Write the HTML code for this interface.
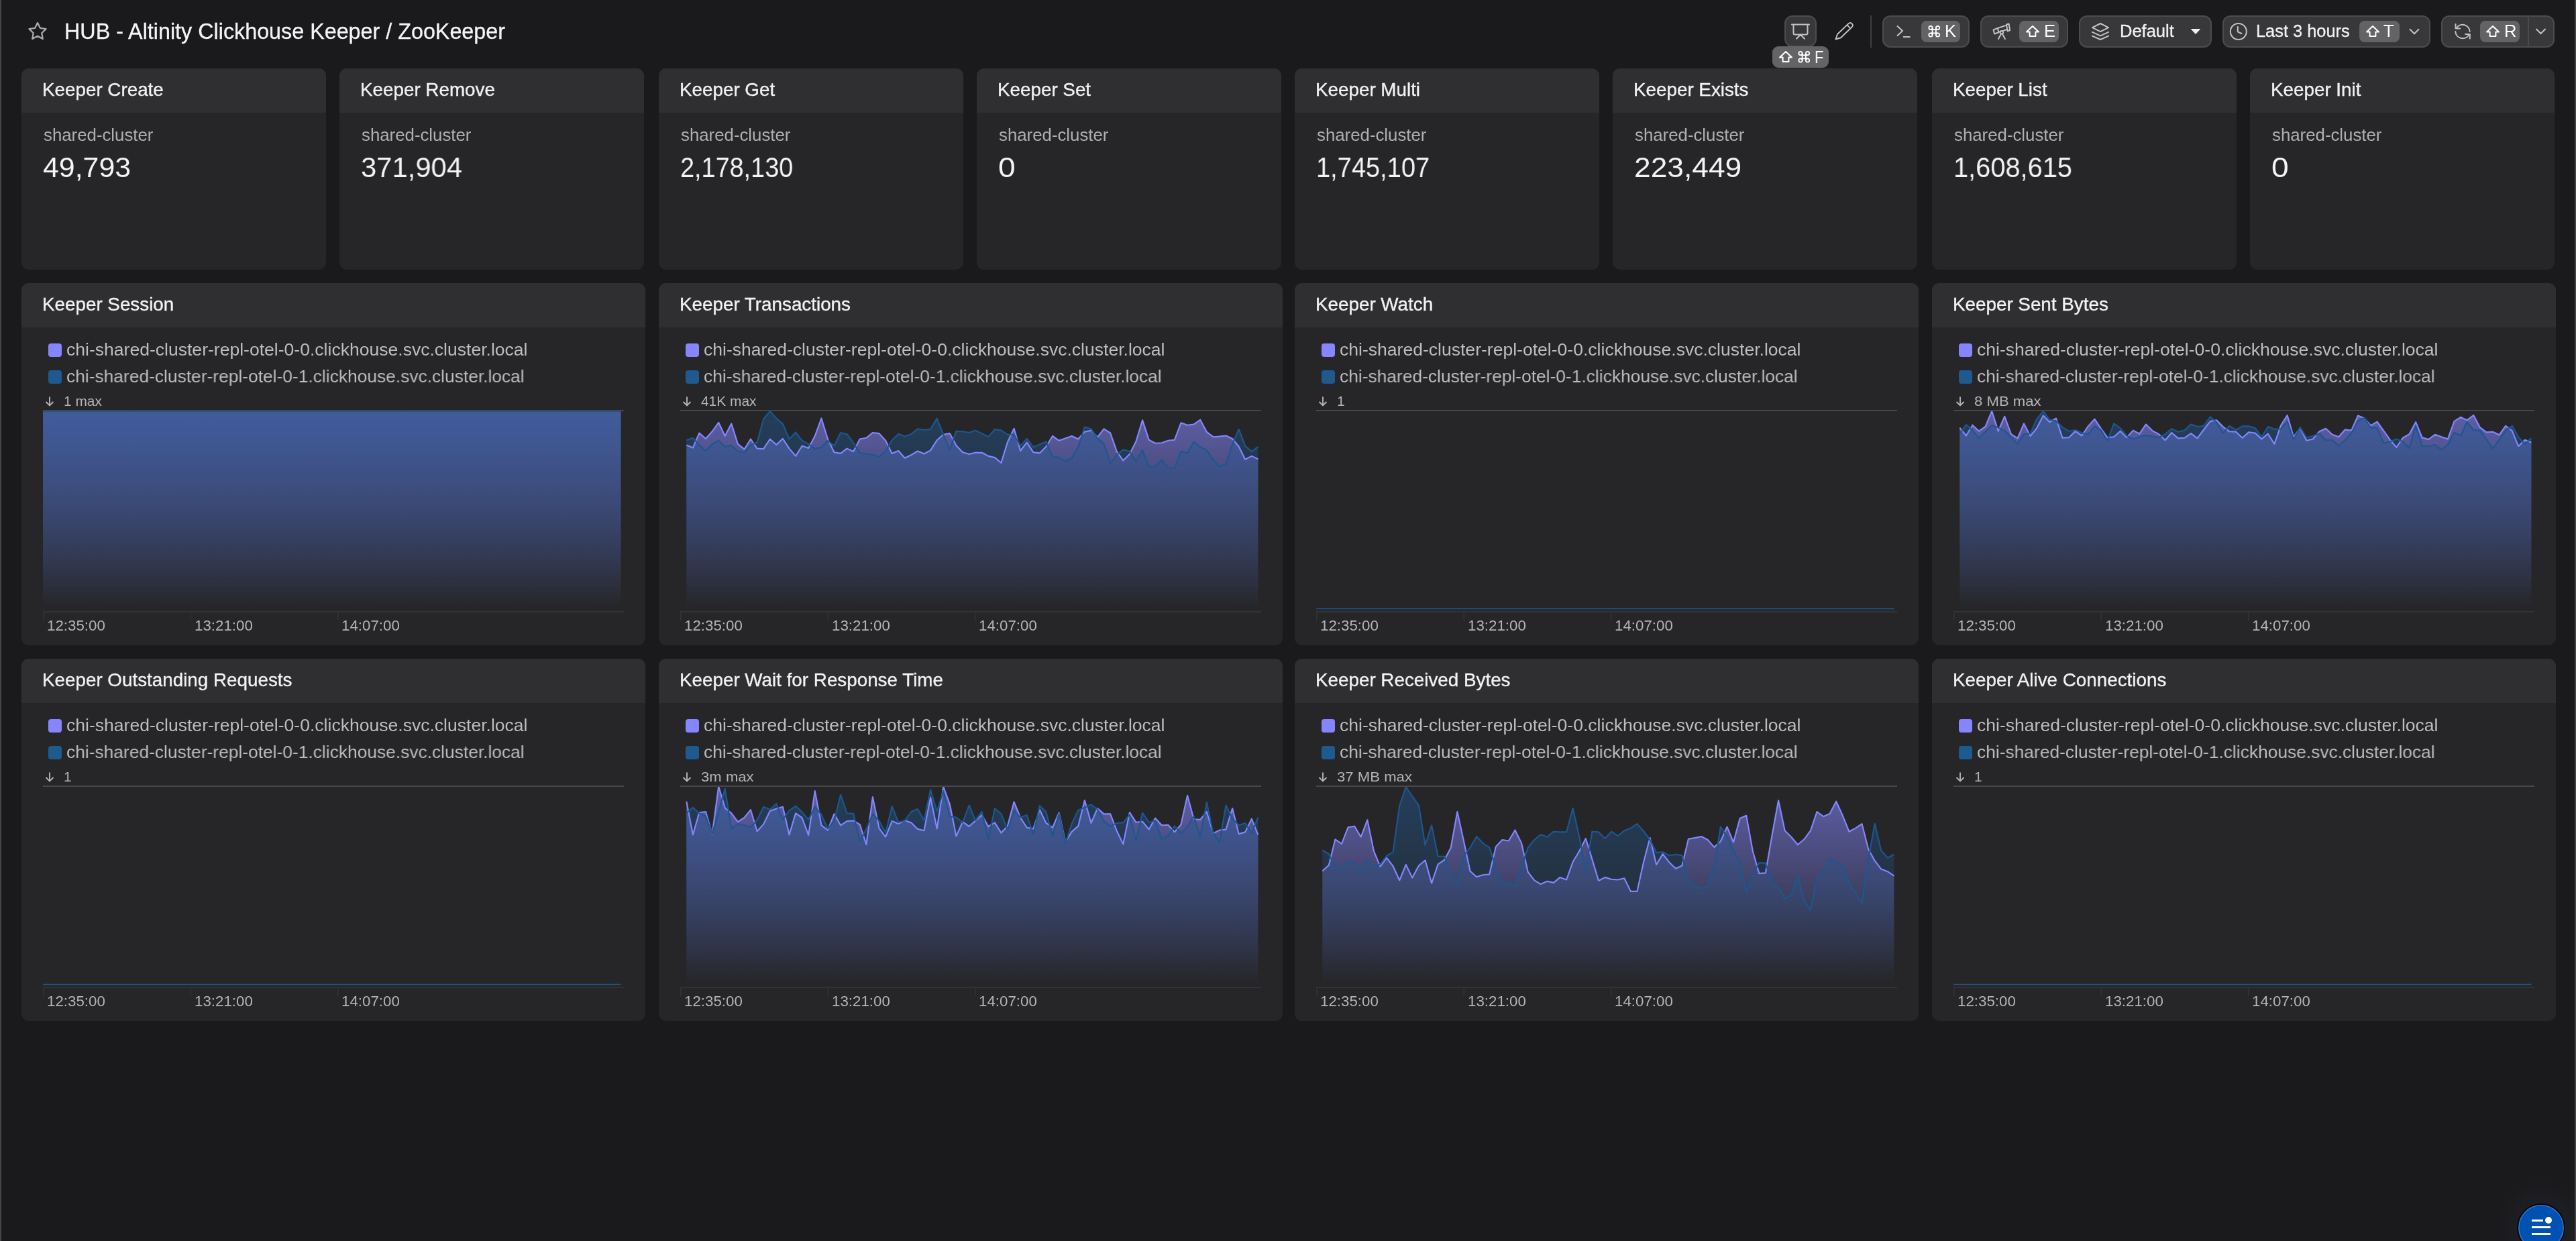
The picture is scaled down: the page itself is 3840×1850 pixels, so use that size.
<!DOCTYPE html>
<html><head><meta charset="utf-8"><style>
html,body{margin:0;padding:0;width:3840px;height:1850px;overflow:hidden;background:#1a1a1c;}
body{position:relative;font-family:"Liberation Sans",sans-serif;}
.t{position:absolute;white-space:nowrap;line-height:1;will-change:transform;}
.card{position:absolute;background:#262628;border-radius:11px;overflow:hidden;}
.hdr{position:absolute;left:0;top:0;right:0;height:66px;background:#2f2f32;}
.btn{position:absolute;box-sizing:border-box;background:#38383a;border:2px solid #4c4c4f;border-radius:12px;}
.kbd{position:absolute;background:#636365;border-radius:8px;}
.sw{position:absolute;width:20px;height:20px;border-radius:4px;}
</style></head><body>
<div style="position:absolute;left:0;top:0;width:2px;height:1850px;background:#464648"></div><div style="position:absolute;left:3838px;top:0;width:2px;height:1850px;background:#464648"></div><svg style="position:absolute;left:0;top:0" width="100" height="100" viewBox="0 0 100 100"><path d="M56.00 34.00 L59.88 41.86 L68.55 43.12 L62.28 49.24 L63.76 57.88 L56.00 53.80 L48.24 57.88 L49.72 49.24 L43.45 43.12 L52.12 41.86 Z" fill="none" stroke="#a9a9ab" stroke-width="2.3" stroke-linejoin="round"/></svg><div class="t" style="left:96px;top:30.66px;font-size:32.3px;color:#f4f4f5;-webkit-text-stroke:0.3px #f4f4f5;">HUB - Altinity Clickhouse Keeper / ZooKeeper</div><div class="btn" style="left:2660px;top:23px;width:48px;height:47px"></div><div class="btn" style="left:2806px;top:23px;width:130px;height:48px"></div><div class="btn" style="left:2952px;top:23px;width:131px;height:48px"></div><div class="btn" style="left:3099px;top:23px;width:198px;height:48px"></div><div class="btn" style="left:3313px;top:23px;width:310px;height:48px"></div><div class="btn" style="left:3639px;top:23px;width:169px;height:48px"></div><div style="position:absolute;left:2788px;top:23px;width:2px;height:48px;background:#3f3f42"></div><div style="position:absolute;left:3768px;top:24px;width:2px;height:46px;background:#4a4a4d"></div><div class="kbd" style="left:2642px;top:69px;width:84px;height:32px;border-radius:9px;background:#646466"></div><div class="kbd" style="left:2864px;top:31px;width:58px;height:32px"></div><div class="kbd" style="left:3010px;top:31px;width:59px;height:32px"></div><div class="kbd" style="left:3517px;top:31px;width:60px;height:32px"></div><div class="kbd" style="left:3697px;top:31px;width:59px;height:32px"></div><svg style="position:absolute;left:0;top:0" width="3840" height="110" viewBox="0 0 3840 110"><path d="M2671 36.5 H2697 M2673.5 36.5 V49.5 Q2673.5 51.5 2675.5 51.5 H2692.5 Q2694.5 51.5 2694.5 49.5 V36.5 M2684 51.5 L2678 57.8 M2684 51.5 L2690 57.8" fill="none" stroke="#c2c2c4" stroke-width="2" stroke-linecap="round"/><g transform="translate(2736.5 58.5) rotate(-44)"><path d="M0 0 L7 -3.6 H30 Q33.5 -3.6 33.5 0 Q33.5 3.6 30 3.6 H7 Z M27 -3.6 V3.6" fill="none" stroke="#c2c2c4" stroke-width="1.9" stroke-linejoin="round"/></g><path d="M2828 38.5 L2836 46 L2828 53.5 M2837 55 H2847.5" fill="none" stroke="#c2c2c4" stroke-width="2"/><path d="M2880.615 41.48 V52.019999999999996 M2885.885 41.48 V52.019999999999996 M2877.98 44.115 H2888.52 M2877.98 49.385 H2888.52" fill="none" stroke="#ffffff" stroke-width="1.8"/><circle cx="2877.98" cy="41.48" r="2.6350000000000002" fill="none" stroke="#ffffff" stroke-width="1.8"/><circle cx="2888.52" cy="41.48" r="2.6350000000000002" fill="none" stroke="#ffffff" stroke-width="1.8"/><circle cx="2877.98" cy="52.019999999999996" r="2.6350000000000002" fill="none" stroke="#ffffff" stroke-width="1.8"/><circle cx="2888.52" cy="52.019999999999996" r="2.6350000000000002" fill="none" stroke="#ffffff" stroke-width="1.8"/><g fill="none" stroke="#c2c2c4" stroke-width="2" stroke-linejoin="round" stroke-linecap="round"><path d="M2971.6 44.4 L2977.8 42 L2979.3 48.3 L2973.1 50.5 Z"/><path d="M2977.9 42 L2991 37.6 M2979.5 47.8 L2983 46.8 M2985.6 45.9 L2992.6 43.8"/><path d="M2991 36.4 L2994.6 35.6 L2996.1 45.2 L2992.6 46.4 Z"/><circle cx="2983.9" cy="48.3" r="2.2"/><path d="M2982.6 51.2 L2979 58 M2985.2 51.2 L2988.9 58"/></g><path d="M3030.0 39 L3039 47.52 L3034.4 47.52 L3034.4 54 L3025.6 54 L3025.6 47.52 L3021 47.52 Z" fill="none" stroke="#ffffff" stroke-width="2" stroke-linejoin="round"/><g fill="none" stroke="#c2c2c4" stroke-width="2" stroke-linejoin="round" stroke-linecap="round"><path d="M3119 41.2 L3131.1 35 L3143 41.2 L3131.1 47.2 Z"/><path d="M3119 47.9 L3131.1 53.4 L3143 47.9"/><path d="M3119 53.6 L3131.1 59 L3143 53.6"/></g><path d="M3266.5 43.5 H3279.5 L3273 50.5 Z" fill="#f2f2f2" stroke="#f2f2f2" stroke-width="1" stroke-linejoin="round"/><g fill="none" stroke="#c2c2c4" stroke-width="2" stroke-linecap="round"><circle cx="3336.8" cy="47" r="12"/><path d="M3335.8 40 V47.3 L3341.5 50"/></g><path d="M3537.0 39 L3546 47.52 L3541.4 47.52 L3541.4 54 L3532.6 54 L3532.6 47.52 L3528 47.52 Z" fill="none" stroke="#ffffff" stroke-width="2" stroke-linejoin="round"/><path d="M3592.5 43.8 L3599 50.3 L3605.5 43.8" fill="none" stroke="#c2c2c4" stroke-width="2" stroke-linecap="round"/><g fill="none" stroke="#c2c2c4" stroke-width="2" stroke-linecap="round" stroke-linejoin="round"><path d="M3681.7 47 A10.8 10.8 0 0 0 3662 41.5"/><path d="M3660.5 36 V42.5 H3667"/><path d="M3660.3 47 A10.8 10.8 0 0 0 3680 52.5"/><path d="M3675 51 H3681.8 V57.5"/></g><path d="M3716.0 39 L3725 47.52 L3720.4 47.52 L3720.4 54 L3711.6 54 L3711.6 47.52 L3707 47.52 Z" fill="none" stroke="#ffffff" stroke-width="2" stroke-linejoin="round"/><path d="M3781 43.5 L3787.5 50 L3794 43.5" fill="none" stroke="#c2c2c4" stroke-width="2" stroke-linecap="round"/><path d="M2662.0 77 L2671 85.52 L2666.4 85.52 L2666.4 92 L2657.6 92 L2657.6 85.52 L2653 85.52 Z" fill="none" stroke="#ffffff" stroke-width="2" stroke-linejoin="round"/><path d="M2686.615 79.48 V90.02 M2691.885 79.48 V90.02 M2683.98 82.115 H2694.52 M2683.98 87.385 H2694.52" fill="none" stroke="#ffffff" stroke-width="1.8"/><circle cx="2683.98" cy="79.48" r="2.6350000000000002" fill="none" stroke="#ffffff" stroke-width="1.8"/><circle cx="2694.52" cy="79.48" r="2.6350000000000002" fill="none" stroke="#ffffff" stroke-width="1.8"/><circle cx="2683.98" cy="90.02" r="2.6350000000000002" fill="none" stroke="#ffffff" stroke-width="1.8"/><circle cx="2694.52" cy="90.02" r="2.6350000000000002" fill="none" stroke="#ffffff" stroke-width="1.8"/></svg><div class="t" style="left:2898.5px;top:34.41px;font-size:25.5px;color:#ffffff;">K</div><div class="t" style="left:3046.5px;top:34.41px;font-size:25.5px;color:#ffffff;">E</div><div class="t" style="left:3553px;top:34.41px;font-size:25.5px;color:#ffffff;">T</div><div class="t" style="left:3732.5px;top:34.41px;font-size:25.5px;color:#ffffff;">R</div><div class="t" style="left:2704.5px;top:72.91px;font-size:25.5px;color:#ffffff;transform:scaleX(0.85);transform-origin:0 0;">F</div><div class="t" style="left:3160px;top:34.41px;font-size:25.5px;color:#f2f2f2;-webkit-text-stroke:0.3px #f2f2f2;">Default</div><div class="t" style="left:3363px;top:34.00px;font-size:25.4px;color:#f2f2f2;-webkit-text-stroke:0.3px #f2f2f2;">Last 3 hours</div><div class="card" style="left:32px;top:102px;width:454px;height:300px"><div class="hdr"></div><div class="t" style="left:30.5px;top:18.17px;font-size:27.8px;color:#f2f2f2;-webkit-text-stroke:0.35px #f2f2f2;">Keeper Create</div><div class="t" style="left:33px;top:87.16px;font-size:25.8px;color:#afafb1;">shared-cluster</div><div class="t" style="left:32px;top:127.45px;font-size:42px;color:#f4f4f5;transform:scaleX(1.02);transform-origin:0 0;">49,793</div></div><div class="card" style="left:506px;top:102px;width:454px;height:300px"><div class="hdr"></div><div class="t" style="left:30.5px;top:18.17px;font-size:27.8px;color:#f2f2f2;-webkit-text-stroke:0.35px #f2f2f2;">Keeper Remove</div><div class="t" style="left:33px;top:87.16px;font-size:25.8px;color:#afafb1;">shared-cluster</div><div class="t" style="left:32px;top:127.45px;font-size:42px;color:#f4f4f5;transform:scaleX(0.995);transform-origin:0 0;">371,904</div></div><div class="card" style="left:982px;top:102px;width:454px;height:300px"><div class="hdr"></div><div class="t" style="left:30.5px;top:18.17px;font-size:27.8px;color:#f2f2f2;-webkit-text-stroke:0.35px #f2f2f2;">Keeper Get</div><div class="t" style="left:33px;top:87.16px;font-size:25.8px;color:#afafb1;">shared-cluster</div><div class="t" style="left:32px;top:127.45px;font-size:42px;color:#f4f4f5;transform:scaleX(0.9);transform-origin:0 0;">2,178,130</div></div><div class="card" style="left:1456px;top:102px;width:454px;height:300px"><div class="hdr"></div><div class="t" style="left:30.5px;top:18.17px;font-size:27.8px;color:#f2f2f2;-webkit-text-stroke:0.35px #f2f2f2;">Keeper Set</div><div class="t" style="left:33px;top:87.16px;font-size:25.8px;color:#afafb1;">shared-cluster</div><div class="t" style="left:32px;top:127.45px;font-size:42px;color:#f4f4f5;transform:scaleX(1.1);transform-origin:0 0;">0</div></div><div class="card" style="left:1930px;top:102px;width:454px;height:300px"><div class="hdr"></div><div class="t" style="left:30.5px;top:18.17px;font-size:27.8px;color:#f2f2f2;-webkit-text-stroke:0.35px #f2f2f2;">Keeper Multi</div><div class="t" style="left:33px;top:87.16px;font-size:25.8px;color:#afafb1;">shared-cluster</div><div class="t" style="left:32px;top:127.45px;font-size:42px;color:#f4f4f5;transform:scaleX(0.905);transform-origin:0 0;">1,745,107</div></div><div class="card" style="left:2404px;top:102px;width:454px;height:300px"><div class="hdr"></div><div class="t" style="left:30.5px;top:18.17px;font-size:27.8px;color:#f2f2f2;-webkit-text-stroke:0.35px #f2f2f2;">Keeper Exists</div><div class="t" style="left:33px;top:87.16px;font-size:25.8px;color:#afafb1;">shared-cluster</div><div class="t" style="left:32px;top:127.45px;font-size:42px;color:#f4f4f5;transform:scaleX(1.055);transform-origin:0 0;">223,449</div></div><div class="card" style="left:2880px;top:102px;width:454px;height:300px"><div class="hdr"></div><div class="t" style="left:30.5px;top:18.17px;font-size:27.8px;color:#f2f2f2;-webkit-text-stroke:0.35px #f2f2f2;">Keeper List</div><div class="t" style="left:33px;top:87.16px;font-size:25.8px;color:#afafb1;">shared-cluster</div><div class="t" style="left:32px;top:127.45px;font-size:42px;color:#f4f4f5;transform:scaleX(0.947);transform-origin:0 0;">1,608,615</div></div><div class="card" style="left:3354px;top:102px;width:454px;height:300px"><div class="hdr"></div><div class="t" style="left:30.5px;top:18.17px;font-size:27.8px;color:#f2f2f2;-webkit-text-stroke:0.35px #f2f2f2;">Keeper Init</div><div class="t" style="left:33px;top:87.16px;font-size:25.8px;color:#afafb1;">shared-cluster</div><div class="t" style="left:32px;top:127.45px;font-size:42px;color:#f4f4f5;transform:scaleX(1.1);transform-origin:0 0;">0</div></div><div class="card" style="left:32px;top:422px;width:930px;height:540px"><div class="hdr"></div><div class="t" style="left:30.5px;top:18.17px;font-size:27.8px;color:#f2f2f2;-webkit-text-stroke:0.35px #f2f2f2;">Keeper Session</div><div class="sw" style="left:40px;top:90px;background:#8586ff"></div><div class="sw" style="left:40px;top:130px;background:#1f5a8f"></div><div class="t" style="left:67px;top:86.03px;font-size:26.55px;color:#bdbdbf;">chi-shared-cluster-repl-otel-0-0.clickhouse.svc.cluster.local</div><div class="t" style="left:67px;top:126.03px;font-size:26.55px;color:#bdbdbf;transform:scaleX(0.993);transform-origin:0 0;">chi-shared-cluster-repl-otel-0-1.clickhouse.svc.cluster.local</div><svg style="position:absolute;left:34px;top:168px" width="16" height="16" viewBox="0 0 16 16"><path d="M8 1.5 V14.5 M2.5 9 L8 14.5 L13.5 9" fill="none" stroke="#b4b4b6" stroke-width="1.9"/></svg><div class="t" style="left:63px;top:165.81px;font-size:20.9px;color:#b4b4b6;transform:scaleX(1.0);transform-origin:0 0;">1 max</div><svg style="position:absolute;left:0;top:0" width="930" height="540" viewBox="0 0 930 540"><defs><linearGradient id="g0" x1="0" y1="0" x2="0" y2="1"><stop offset="0" stop-color="#3d5a96"/><stop offset="1" stop-color="#262628"/></linearGradient></defs><defs><linearGradient id="gl0" gradientUnits="userSpaceOnUse" x1="0" y1="190.2" x2="0" y2="485.5"><stop offset="0" stop-color="#8486ff" stop-opacity="0.6"/><stop offset="1" stop-color="#8486ff" stop-opacity="0"/></linearGradient><linearGradient id="gd0" gradientUnits="userSpaceOnUse" x1="0" y1="190.2" x2="0" y2="485.5"><stop offset="0" stop-color="#225890" stop-opacity="0.5"/><stop offset="1" stop-color="#225890" stop-opacity="0"/></linearGradient></defs><rect x="32" y="190.2" width="861.5" height="295.3" fill="url(#gl0)"/><rect x="32" y="190.2" width="861.5" height="295.3" fill="url(#gd0)"/><path d="M32 191.0 H893.5" stroke="#1c5790" stroke-width="2"/><rect x="32" y="189" width="866" height="2" fill="#47474a"/><rect x="32" y="489" width="866" height="2" fill="#333336"/><rect x="32" y="490" width="1.5" height="13" fill="#333336"/><rect x="251.5" y="490" width="1.5" height="13" fill="#333336"/><rect x="471" y="490" width="1.5" height="13" fill="#333336"/></svg><div class="t" style="left:38px;top:499.62px;font-size:22.3px;color:#b4b4b6;">12:35:00</div><div class="t" style="left:257.5px;top:499.62px;font-size:22.3px;color:#b4b4b6;">13:21:00</div><div class="t" style="left:477px;top:499.62px;font-size:22.3px;color:#b4b4b6;">14:07:00</div></div><div class="card" style="left:982px;top:422px;width:930px;height:540px"><div class="hdr"></div><div class="t" style="left:30.5px;top:18.17px;font-size:27.8px;color:#f2f2f2;-webkit-text-stroke:0.35px #f2f2f2;">Keeper Transactions</div><div class="sw" style="left:40px;top:90px;background:#8586ff"></div><div class="sw" style="left:40px;top:130px;background:#1f5a8f"></div><div class="t" style="left:67px;top:86.03px;font-size:26.55px;color:#bdbdbf;">chi-shared-cluster-repl-otel-0-0.clickhouse.svc.cluster.local</div><div class="t" style="left:67px;top:126.03px;font-size:26.55px;color:#bdbdbf;transform:scaleX(0.993);transform-origin:0 0;">chi-shared-cluster-repl-otel-0-1.clickhouse.svc.cluster.local</div><svg style="position:absolute;left:34px;top:168px" width="16" height="16" viewBox="0 0 16 16"><path d="M8 1.5 V14.5 M2.5 9 L8 14.5 L13.5 9" fill="none" stroke="#b4b4b6" stroke-width="1.9"/></svg><div class="t" style="left:63px;top:165.81px;font-size:20.9px;color:#b4b4b6;transform:scaleX(1.0);transform-origin:0 0;">41K max</div><svg style="position:absolute;left:0;top:0" width="930" height="540" viewBox="0 0 930 540"><defs><linearGradient id="g1" x1="0" y1="0" x2="0" y2="1"><stop offset="0" stop-color="#3d5a96"/><stop offset="1" stop-color="#262628"/></linearGradient></defs><defs><linearGradient id="gl1" gradientUnits="userSpaceOnUse" x1="0" y1="190.2" x2="0" y2="485.5"><stop offset="0" stop-color="#8486ff" stop-opacity="0.6"/><stop offset="1" stop-color="#8486ff" stop-opacity="0"/></linearGradient><linearGradient id="gd1" gradientUnits="userSpaceOnUse" x1="0" y1="190.2" x2="0" y2="485.5"><stop offset="0" stop-color="#225890" stop-opacity="0.5"/><stop offset="1" stop-color="#225890" stop-opacity="0"/></linearGradient></defs><path d="M41.3 241.5 L50.9 245.5 L60.4 223.5 L70.0 232.0 L79.6 221.3 L89.2 207.8 L98.7 228.0 L108.3 209.5 L117.9 239.9 L127.5 247.7 L137.0 232.5 L146.6 246.6 L156.2 247.2 L165.8 232.5 L175.3 241.0 L184.9 232.0 L194.5 246.6 L204.1 257.9 L213.6 242.7 L223.2 246.0 L232.8 228.0 L242.4 201.6 L251.9 232.5 L261.5 252.2 L271.1 253.9 L280.6 246.6 L290.2 251.1 L299.8 232.5 L309.4 230.8 L318.9 223.0 L328.5 224.1 L338.1 234.8 L347.7 253.9 L357.2 250.0 L366.8 260.7 L376.4 256.2 L386.0 250.5 L395.5 254.5 L405.1 249.4 L414.7 234.2 L424.3 225.8 L433.8 224.1 L443.4 242.1 L453.0 252.2 L462.6 255.0 L472.1 252.8 L481.7 252.8 L491.3 257.9 L500.9 260.1 L510.4 268.0 L520.0 237.0 L529.6 216.8 L539.1 250.0 L548.7 237.6 L558.3 252.2 L567.9 253.4 L577.4 243.8 L587.0 228.0 L596.6 234.8 L606.2 231.4 L615.7 228.0 L625.3 232.5 L634.9 221.8 L644.5 219.6 L654.0 229.7 L663.6 217.3 L673.2 223.5 L682.8 251.1 L692.3 264.6 L701.9 255.0 L711.5 235.9 L721.1 204.4 L730.6 233.7 L740.2 238.7 L749.8 238.2 L759.3 234.8 L768.9 233.7 L778.5 208.3 L788.1 211.7 L797.6 210.6 L807.2 203.8 L816.8 221.8 L826.4 229.2 L835.9 228.6 L845.5 227.5 L855.1 232.0 L864.7 243.8 L874.2 262.9 L883.8 257.9 L893.4 262.4 L893.4 485.5 L41.3 485.5 Z" fill="url(#gl1)"/><path d="M41.3 234.2 L50.9 230.8 L60.4 241.5 L70.0 250.5 L79.6 240.4 L89.2 234.8 L98.7 243.8 L108.3 242.1 L117.9 250.5 L127.5 252.8 L137.0 241.5 L146.6 237.6 L156.2 202.7 L165.8 190.9 L175.3 201.6 L184.9 210.0 L194.5 232.5 L204.1 222.4 L213.6 234.8 L223.2 239.9 L232.8 247.2 L242.4 244.9 L251.9 234.8 L261.5 242.7 L271.1 223.0 L280.6 225.2 L290.2 238.2 L299.8 253.4 L309.4 254.5 L318.9 255.6 L328.5 259.0 L338.1 250.5 L347.7 234.2 L357.2 224.7 L366.8 228.6 L376.4 225.2 L386.0 217.3 L395.5 219.0 L405.1 217.9 L414.7 201.6 L424.3 225.8 L433.8 248.9 L443.4 220.7 L453.0 221.3 L462.6 223.0 L472.1 219.6 L481.7 224.1 L491.3 229.2 L500.9 217.9 L510.4 219.6 L520.0 225.8 L529.6 225.8 L539.1 242.7 L548.7 232.0 L558.3 244.4 L567.9 240.4 L577.4 236.5 L587.0 259.0 L596.6 260.1 L606.2 265.7 L615.7 260.7 L625.3 244.4 L634.9 214.5 L644.5 217.3 L654.0 231.4 L663.6 239.9 L673.2 269.1 L682.8 256.2 L692.3 248.3 L701.9 251.1 L711.5 265.7 L721.1 248.9 L730.6 274.2 L740.2 273.6 L749.8 263.5 L759.3 275.9 L768.9 275.9 L778.5 251.1 L788.1 253.4 L797.6 236.5 L807.2 244.4 L816.8 249.4 L826.4 263.5 L835.9 273.6 L845.5 269.7 L855.1 240.4 L864.7 217.9 L874.2 242.7 L883.8 251.1 L893.4 243.8 L893.4 485.5 L41.3 485.5 Z" fill="url(#gd1)"/><path d="M41.3 241.5 L50.9 245.5 L60.4 223.5 L70.0 232.0 L79.6 221.3 L89.2 207.8 L98.7 228.0 L108.3 209.5 L117.9 239.9 L127.5 247.7 L137.0 232.5 L146.6 246.6 L156.2 247.2 L165.8 232.5 L175.3 241.0 L184.9 232.0 L194.5 246.6 L204.1 257.9 L213.6 242.7 L223.2 246.0 L232.8 228.0 L242.4 201.6 L251.9 232.5 L261.5 252.2 L271.1 253.9 L280.6 246.6 L290.2 251.1 L299.8 232.5 L309.4 230.8 L318.9 223.0 L328.5 224.1 L338.1 234.8 L347.7 253.9 L357.2 250.0 L366.8 260.7 L376.4 256.2 L386.0 250.5 L395.5 254.5 L405.1 249.4 L414.7 234.2 L424.3 225.8 L433.8 224.1 L443.4 242.1 L453.0 252.2 L462.6 255.0 L472.1 252.8 L481.7 252.8 L491.3 257.9 L500.9 260.1 L510.4 268.0 L520.0 237.0 L529.6 216.8 L539.1 250.0 L548.7 237.6 L558.3 252.2 L567.9 253.4 L577.4 243.8 L587.0 228.0 L596.6 234.8 L606.2 231.4 L615.7 228.0 L625.3 232.5 L634.9 221.8 L644.5 219.6 L654.0 229.7 L663.6 217.3 L673.2 223.5 L682.8 251.1 L692.3 264.6 L701.9 255.0 L711.5 235.9 L721.1 204.4 L730.6 233.7 L740.2 238.7 L749.8 238.2 L759.3 234.8 L768.9 233.7 L778.5 208.3 L788.1 211.7 L797.6 210.6 L807.2 203.8 L816.8 221.8 L826.4 229.2 L835.9 228.6 L845.5 227.5 L855.1 232.0 L864.7 243.8 L874.2 262.9 L883.8 257.9 L893.4 262.4" fill="none" stroke="#8486ff" stroke-width="2.15" stroke-linejoin="round"/><path d="M41.3 234.2 L50.9 230.8 L60.4 241.5 L70.0 250.5 L79.6 240.4 L89.2 234.8 L98.7 243.8 L108.3 242.1 L117.9 250.5 L127.5 252.8 L137.0 241.5 L146.6 237.6 L156.2 202.7 L165.8 190.9 L175.3 201.6 L184.9 210.0 L194.5 232.5 L204.1 222.4 L213.6 234.8 L223.2 239.9 L232.8 247.2 L242.4 244.9 L251.9 234.8 L261.5 242.7 L271.1 223.0 L280.6 225.2 L290.2 238.2 L299.8 253.4 L309.4 254.5 L318.9 255.6 L328.5 259.0 L338.1 250.5 L347.7 234.2 L357.2 224.7 L366.8 228.6 L376.4 225.2 L386.0 217.3 L395.5 219.0 L405.1 217.9 L414.7 201.6 L424.3 225.8 L433.8 248.9 L443.4 220.7 L453.0 221.3 L462.6 223.0 L472.1 219.6 L481.7 224.1 L491.3 229.2 L500.9 217.9 L510.4 219.6 L520.0 225.8 L529.6 225.8 L539.1 242.7 L548.7 232.0 L558.3 244.4 L567.9 240.4 L577.4 236.5 L587.0 259.0 L596.6 260.1 L606.2 265.7 L615.7 260.7 L625.3 244.4 L634.9 214.5 L644.5 217.3 L654.0 231.4 L663.6 239.9 L673.2 269.1 L682.8 256.2 L692.3 248.3 L701.9 251.1 L711.5 265.7 L721.1 248.9 L730.6 274.2 L740.2 273.6 L749.8 263.5 L759.3 275.9 L768.9 275.9 L778.5 251.1 L788.1 253.4 L797.6 236.5 L807.2 244.4 L816.8 249.4 L826.4 263.5 L835.9 273.6 L845.5 269.7 L855.1 240.4 L864.7 217.9 L874.2 242.7 L883.8 251.1 L893.4 243.8" fill="none" stroke="#1c5790" stroke-width="2.15" stroke-linejoin="round"/><rect x="32" y="189" width="866" height="2" fill="#47474a"/><rect x="32" y="489" width="866" height="2" fill="#333336"/><rect x="32" y="490" width="1.5" height="13" fill="#333336"/><rect x="251.5" y="490" width="1.5" height="13" fill="#333336"/><rect x="471" y="490" width="1.5" height="13" fill="#333336"/></svg><div class="t" style="left:38px;top:499.62px;font-size:22.3px;color:#b4b4b6;">12:35:00</div><div class="t" style="left:257.5px;top:499.62px;font-size:22.3px;color:#b4b4b6;">13:21:00</div><div class="t" style="left:477px;top:499.62px;font-size:22.3px;color:#b4b4b6;">14:07:00</div></div><div class="card" style="left:1930px;top:422px;width:930px;height:540px"><div class="hdr"></div><div class="t" style="left:30.5px;top:18.17px;font-size:27.8px;color:#f2f2f2;-webkit-text-stroke:0.35px #f2f2f2;">Keeper Watch</div><div class="sw" style="left:40px;top:90px;background:#8586ff"></div><div class="sw" style="left:40px;top:130px;background:#1f5a8f"></div><div class="t" style="left:67px;top:86.03px;font-size:26.55px;color:#bdbdbf;">chi-shared-cluster-repl-otel-0-0.clickhouse.svc.cluster.local</div><div class="t" style="left:67px;top:126.03px;font-size:26.55px;color:#bdbdbf;transform:scaleX(0.993);transform-origin:0 0;">chi-shared-cluster-repl-otel-0-1.clickhouse.svc.cluster.local</div><svg style="position:absolute;left:34px;top:168px" width="16" height="16" viewBox="0 0 16 16"><path d="M8 1.5 V14.5 M2.5 9 L8 14.5 L13.5 9" fill="none" stroke="#b4b4b6" stroke-width="1.9"/></svg><div class="t" style="left:63px;top:165.81px;font-size:20.9px;color:#b4b4b6;transform:scaleX(1.0);transform-origin:0 0;">1</div><svg style="position:absolute;left:0;top:0" width="930" height="540" viewBox="0 0 930 540"><defs><linearGradient id="g2" x1="0" y1="0" x2="0" y2="1"><stop offset="0" stop-color="#3d5a96"/><stop offset="1" stop-color="#262628"/></linearGradient></defs><path d="M32 485.5 H893.5" stroke="#1c5790" stroke-width="1.5"/><rect x="32" y="189" width="866" height="2" fill="#47474a"/><rect x="32" y="489" width="866" height="2" fill="#333336"/><rect x="32" y="490" width="1.5" height="13" fill="#333336"/><rect x="251.5" y="490" width="1.5" height="13" fill="#333336"/><rect x="471" y="490" width="1.5" height="13" fill="#333336"/></svg><div class="t" style="left:38px;top:499.62px;font-size:22.3px;color:#b4b4b6;">12:35:00</div><div class="t" style="left:257.5px;top:499.62px;font-size:22.3px;color:#b4b4b6;">13:21:00</div><div class="t" style="left:477px;top:499.62px;font-size:22.3px;color:#b4b4b6;">14:07:00</div></div><div class="card" style="left:2880px;top:422px;width:930px;height:540px"><div class="hdr"></div><div class="t" style="left:30.5px;top:18.17px;font-size:27.8px;color:#f2f2f2;-webkit-text-stroke:0.35px #f2f2f2;">Keeper Sent Bytes</div><div class="sw" style="left:40px;top:90px;background:#8586ff"></div><div class="sw" style="left:40px;top:130px;background:#1f5a8f"></div><div class="t" style="left:67px;top:86.03px;font-size:26.55px;color:#bdbdbf;">chi-shared-cluster-repl-otel-0-0.clickhouse.svc.cluster.local</div><div class="t" style="left:67px;top:126.03px;font-size:26.55px;color:#bdbdbf;transform:scaleX(0.993);transform-origin:0 0;">chi-shared-cluster-repl-otel-0-1.clickhouse.svc.cluster.local</div><svg style="position:absolute;left:34px;top:168px" width="16" height="16" viewBox="0 0 16 16"><path d="M8 1.5 V14.5 M2.5 9 L8 14.5 L13.5 9" fill="none" stroke="#b4b4b6" stroke-width="1.9"/></svg><div class="t" style="left:63px;top:165.81px;font-size:20.9px;color:#b4b4b6;transform:scaleX(1.06);transform-origin:0 0;">8 MB max</div><svg style="position:absolute;left:0;top:0" width="930" height="540" viewBox="0 0 930 540"><defs><linearGradient id="g3" x1="0" y1="0" x2="0" y2="1"><stop offset="0" stop-color="#3d5a96"/><stop offset="1" stop-color="#262628"/></linearGradient></defs><defs><linearGradient id="gl3" gradientUnits="userSpaceOnUse" x1="0" y1="190.2" x2="0" y2="485.5"><stop offset="0" stop-color="#8486ff" stop-opacity="0.6"/><stop offset="1" stop-color="#8486ff" stop-opacity="0"/></linearGradient><linearGradient id="gd3" gradientUnits="userSpaceOnUse" x1="0" y1="190.2" x2="0" y2="485.5"><stop offset="0" stop-color="#225890" stop-opacity="0.5"/><stop offset="1" stop-color="#225890" stop-opacity="0"/></linearGradient></defs><path d="M41.3 215.6 L50.9 227.5 L60.4 211.7 L70.0 220.7 L79.6 214.0 L89.2 190.9 L98.7 220.7 L108.3 198.8 L117.9 225.2 L127.5 231.4 L137.0 209.5 L146.6 228.0 L156.2 216.2 L165.8 197.6 L175.3 207.2 L184.9 201.6 L194.5 230.8 L204.1 230.3 L213.6 220.7 L223.2 227.5 L232.8 213.4 L242.4 202.7 L251.9 216.8 L261.5 230.3 L271.1 229.2 L280.6 220.7 L290.2 230.3 L299.8 219.6 L309.4 224.7 L318.9 210.6 L328.5 220.1 L338.1 225.2 L347.7 234.2 L357.2 223.0 L366.8 231.4 L376.4 230.8 L386.0 224.1 L395.5 231.4 L405.1 218.5 L414.7 206.1 L424.3 204.4 L433.8 214.0 L443.4 221.3 L453.0 221.8 L462.6 230.8 L472.1 222.4 L481.7 223.5 L491.3 232.5 L500.9 224.7 L510.4 239.9 L520.0 212.3 L529.6 197.1 L539.1 229.7 L548.7 216.2 L558.3 234.8 L567.9 232.5 L577.4 221.3 L587.0 216.8 L596.6 225.8 L606.2 229.2 L615.7 218.5 L625.3 219.6 L634.9 197.6 L644.5 201.6 L654.0 212.3 L663.6 206.6 L673.2 220.1 L682.8 233.7 L692.3 244.9 L701.9 230.8 L711.5 225.2 L721.1 207.2 L730.6 230.3 L740.2 233.1 L749.8 225.8 L759.3 229.2 L768.9 232.5 L778.5 206.1 L788.1 199.9 L797.6 204.4 L807.2 197.1 L816.8 215.1 L826.4 222.4 L835.9 221.8 L845.5 226.3 L855.1 212.8 L864.7 220.1 L874.2 243.2 L883.8 233.7 L893.4 237.6 L893.4 485.5 L41.3 485.5 Z" fill="url(#gl3)"/><path d="M41.3 225.2 L50.9 211.1 L60.4 219.6 L70.0 231.4 L79.6 221.3 L89.2 212.3 L98.7 215.6 L108.3 220.1 L117.9 229.7 L127.5 239.9 L137.0 225.2 L146.6 224.1 L156.2 202.7 L165.8 190.9 L175.3 203.8 L184.9 205.5 L194.5 215.1 L204.1 220.7 L213.6 219.0 L223.2 223.0 L232.8 225.8 L242.4 213.4 L251.9 219.0 L261.5 235.3 L271.1 209.5 L280.6 216.2 L290.2 227.5 L299.8 232.5 L309.4 229.2 L318.9 226.9 L328.5 228.6 L338.1 230.3 L347.7 225.2 L357.2 217.3 L366.8 221.8 L376.4 219.6 L386.0 210.6 L395.5 214.0 L405.1 212.8 L414.7 199.3 L424.3 207.8 L433.8 223.5 L443.4 212.8 L453.0 219.0 L462.6 213.4 L472.1 213.4 L481.7 216.2 L491.3 229.2 L500.9 214.0 L510.4 217.9 L520.0 217.3 L529.6 206.6 L539.1 233.1 L548.7 215.1 L558.3 230.3 L567.9 228.0 L577.4 224.1 L587.0 234.2 L596.6 233.7 L606.2 242.7 L615.7 234.2 L625.3 223.5 L634.9 205.5 L644.5 201.0 L654.0 215.6 L663.6 215.6 L673.2 238.7 L682.8 236.5 L692.3 232.5 L701.9 236.5 L711.5 246.0 L721.1 212.8 L730.6 242.7 L740.2 243.2 L749.8 241.0 L759.3 248.3 L768.9 241.0 L778.5 223.0 L788.1 227.5 L797.6 207.2 L807.2 219.0 L816.8 219.6 L826.4 233.1 L835.9 246.6 L845.5 233.7 L855.1 220.1 L864.7 212.8 L874.2 229.7 L883.8 239.9 L893.4 231.4 L893.4 485.5 L41.3 485.5 Z" fill="url(#gd3)"/><path d="M41.3 215.6 L50.9 227.5 L60.4 211.7 L70.0 220.7 L79.6 214.0 L89.2 190.9 L98.7 220.7 L108.3 198.8 L117.9 225.2 L127.5 231.4 L137.0 209.5 L146.6 228.0 L156.2 216.2 L165.8 197.6 L175.3 207.2 L184.9 201.6 L194.5 230.8 L204.1 230.3 L213.6 220.7 L223.2 227.5 L232.8 213.4 L242.4 202.7 L251.9 216.8 L261.5 230.3 L271.1 229.2 L280.6 220.7 L290.2 230.3 L299.8 219.6 L309.4 224.7 L318.9 210.6 L328.5 220.1 L338.1 225.2 L347.7 234.2 L357.2 223.0 L366.8 231.4 L376.4 230.8 L386.0 224.1 L395.5 231.4 L405.1 218.5 L414.7 206.1 L424.3 204.4 L433.8 214.0 L443.4 221.3 L453.0 221.8 L462.6 230.8 L472.1 222.4 L481.7 223.5 L491.3 232.5 L500.9 224.7 L510.4 239.9 L520.0 212.3 L529.6 197.1 L539.1 229.7 L548.7 216.2 L558.3 234.8 L567.9 232.5 L577.4 221.3 L587.0 216.8 L596.6 225.8 L606.2 229.2 L615.7 218.5 L625.3 219.6 L634.9 197.6 L644.5 201.6 L654.0 212.3 L663.6 206.6 L673.2 220.1 L682.8 233.7 L692.3 244.9 L701.9 230.8 L711.5 225.2 L721.1 207.2 L730.6 230.3 L740.2 233.1 L749.8 225.8 L759.3 229.2 L768.9 232.5 L778.5 206.1 L788.1 199.9 L797.6 204.4 L807.2 197.1 L816.8 215.1 L826.4 222.4 L835.9 221.8 L845.5 226.3 L855.1 212.8 L864.7 220.1 L874.2 243.2 L883.8 233.7 L893.4 237.6" fill="none" stroke="#8486ff" stroke-width="2.15" stroke-linejoin="round"/><path d="M41.3 225.2 L50.9 211.1 L60.4 219.6 L70.0 231.4 L79.6 221.3 L89.2 212.3 L98.7 215.6 L108.3 220.1 L117.9 229.7 L127.5 239.9 L137.0 225.2 L146.6 224.1 L156.2 202.7 L165.8 190.9 L175.3 203.8 L184.9 205.5 L194.5 215.1 L204.1 220.7 L213.6 219.0 L223.2 223.0 L232.8 225.8 L242.4 213.4 L251.9 219.0 L261.5 235.3 L271.1 209.5 L280.6 216.2 L290.2 227.5 L299.8 232.5 L309.4 229.2 L318.9 226.9 L328.5 228.6 L338.1 230.3 L347.7 225.2 L357.2 217.3 L366.8 221.8 L376.4 219.6 L386.0 210.6 L395.5 214.0 L405.1 212.8 L414.7 199.3 L424.3 207.8 L433.8 223.5 L443.4 212.8 L453.0 219.0 L462.6 213.4 L472.1 213.4 L481.7 216.2 L491.3 229.2 L500.9 214.0 L510.4 217.9 L520.0 217.3 L529.6 206.6 L539.1 233.1 L548.7 215.1 L558.3 230.3 L567.9 228.0 L577.4 224.1 L587.0 234.2 L596.6 233.7 L606.2 242.7 L615.7 234.2 L625.3 223.5 L634.9 205.5 L644.5 201.0 L654.0 215.6 L663.6 215.6 L673.2 238.7 L682.8 236.5 L692.3 232.5 L701.9 236.5 L711.5 246.0 L721.1 212.8 L730.6 242.7 L740.2 243.2 L749.8 241.0 L759.3 248.3 L768.9 241.0 L778.5 223.0 L788.1 227.5 L797.6 207.2 L807.2 219.0 L816.8 219.6 L826.4 233.1 L835.9 246.6 L845.5 233.7 L855.1 220.1 L864.7 212.8 L874.2 229.7 L883.8 239.9 L893.4 231.4" fill="none" stroke="#1c5790" stroke-width="2.15" stroke-linejoin="round"/><rect x="32" y="189" width="866" height="2" fill="#47474a"/><rect x="32" y="489" width="866" height="2" fill="#333336"/><rect x="32" y="490" width="1.5" height="13" fill="#333336"/><rect x="251.5" y="490" width="1.5" height="13" fill="#333336"/><rect x="471" y="490" width="1.5" height="13" fill="#333336"/></svg><div class="t" style="left:38px;top:499.62px;font-size:22.3px;color:#b4b4b6;">12:35:00</div><div class="t" style="left:257.5px;top:499.62px;font-size:22.3px;color:#b4b4b6;">13:21:00</div><div class="t" style="left:477px;top:499.62px;font-size:22.3px;color:#b4b4b6;">14:07:00</div></div><div class="card" style="left:32px;top:982px;width:930px;height:540px"><div class="hdr"></div><div class="t" style="left:30.5px;top:18.17px;font-size:27.8px;color:#f2f2f2;-webkit-text-stroke:0.35px #f2f2f2;">Keeper Outstanding Requests</div><div class="sw" style="left:40px;top:90px;background:#8586ff"></div><div class="sw" style="left:40px;top:130px;background:#1f5a8f"></div><div class="t" style="left:67px;top:86.03px;font-size:26.55px;color:#bdbdbf;">chi-shared-cluster-repl-otel-0-0.clickhouse.svc.cluster.local</div><div class="t" style="left:67px;top:126.03px;font-size:26.55px;color:#bdbdbf;transform:scaleX(0.993);transform-origin:0 0;">chi-shared-cluster-repl-otel-0-1.clickhouse.svc.cluster.local</div><svg style="position:absolute;left:34px;top:168px" width="16" height="16" viewBox="0 0 16 16"><path d="M8 1.5 V14.5 M2.5 9 L8 14.5 L13.5 9" fill="none" stroke="#b4b4b6" stroke-width="1.9"/></svg><div class="t" style="left:63px;top:165.81px;font-size:20.9px;color:#b4b4b6;transform:scaleX(1.0);transform-origin:0 0;">1</div><svg style="position:absolute;left:0;top:0" width="930" height="540" viewBox="0 0 930 540"><defs><linearGradient id="g4" x1="0" y1="0" x2="0" y2="1"><stop offset="0" stop-color="#3d5a96"/><stop offset="1" stop-color="#262628"/></linearGradient></defs><path d="M32 485.5 H893.5" stroke="#1c5790" stroke-width="1.5"/><rect x="32" y="189" width="866" height="2" fill="#47474a"/><rect x="32" y="489" width="866" height="2" fill="#333336"/><rect x="32" y="490" width="1.5" height="13" fill="#333336"/><rect x="251.5" y="490" width="1.5" height="13" fill="#333336"/><rect x="471" y="490" width="1.5" height="13" fill="#333336"/></svg><div class="t" style="left:38px;top:499.62px;font-size:22.3px;color:#b4b4b6;">12:35:00</div><div class="t" style="left:257.5px;top:499.62px;font-size:22.3px;color:#b4b4b6;">13:21:00</div><div class="t" style="left:477px;top:499.62px;font-size:22.3px;color:#b4b4b6;">14:07:00</div></div><div class="card" style="left:982px;top:982px;width:930px;height:540px"><div class="hdr"></div><div class="t" style="left:30.5px;top:18.17px;font-size:27.8px;color:#f2f2f2;-webkit-text-stroke:0.35px #f2f2f2;">Keeper Wait for Response Time</div><div class="sw" style="left:40px;top:90px;background:#8586ff"></div><div class="sw" style="left:40px;top:130px;background:#1f5a8f"></div><div class="t" style="left:67px;top:86.03px;font-size:26.55px;color:#bdbdbf;">chi-shared-cluster-repl-otel-0-0.clickhouse.svc.cluster.local</div><div class="t" style="left:67px;top:126.03px;font-size:26.55px;color:#bdbdbf;transform:scaleX(0.993);transform-origin:0 0;">chi-shared-cluster-repl-otel-0-1.clickhouse.svc.cluster.local</div><svg style="position:absolute;left:34px;top:168px" width="16" height="16" viewBox="0 0 16 16"><path d="M8 1.5 V14.5 M2.5 9 L8 14.5 L13.5 9" fill="none" stroke="#b4b4b6" stroke-width="1.9"/></svg><div class="t" style="left:63px;top:165.81px;font-size:20.9px;color:#b4b4b6;transform:scaleX(1.059);transform-origin:0 0;">3m max</div><svg style="position:absolute;left:0;top:0" width="930" height="540" viewBox="0 0 930 540"><defs><linearGradient id="g5" x1="0" y1="0" x2="0" y2="1"><stop offset="0" stop-color="#3d5a96"/><stop offset="1" stop-color="#262628"/></linearGradient></defs><defs><linearGradient id="gl5" gradientUnits="userSpaceOnUse" x1="0" y1="190.2" x2="0" y2="485.5"><stop offset="0" stop-color="#8486ff" stop-opacity="0.6"/><stop offset="1" stop-color="#8486ff" stop-opacity="0"/></linearGradient><linearGradient id="gd5" gradientUnits="userSpaceOnUse" x1="0" y1="190.2" x2="0" y2="485.5"><stop offset="0" stop-color="#225890" stop-opacity="0.5"/><stop offset="1" stop-color="#225890" stop-opacity="0"/></linearGradient></defs><path d="M41.3 212.8 L50.9 262.4 L60.4 229.2 L70.0 228.0 L79.6 261.8 L89.2 190.3 L98.7 222.4 L108.3 230.3 L117.9 243.2 L127.5 237.0 L137.0 225.2 L146.6 257.3 L156.2 246.6 L165.8 226.9 L175.3 223.5 L184.9 220.7 L194.5 262.4 L204.1 230.3 L213.6 237.0 L223.2 262.9 L232.8 197.1 L242.4 248.3 L251.9 255.6 L261.5 231.4 L271.1 248.3 L280.6 242.1 L290.2 241.5 L299.8 247.2 L309.4 277.0 L318.9 206.1 L328.5 252.8 L338.1 265.7 L347.7 242.1 L357.2 246.0 L366.8 241.0 L376.4 244.4 L386.0 253.9 L395.5 256.2 L405.1 206.6 L414.7 253.4 L424.3 190.9 L433.8 216.8 L443.4 264.6 L453.0 243.2 L462.6 250.0 L472.1 241.5 L481.7 233.1 L491.3 250.0 L500.9 244.4 L510.4 259.6 L520.0 249.4 L529.6 213.4 L539.1 237.0 L548.7 251.7 L558.3 253.4 L567.9 225.2 L577.4 244.9 L587.0 251.7 L596.6 229.7 L606.2 273.1 L615.7 257.9 L625.3 249.4 L634.9 211.1 L644.5 244.9 L654.0 223.0 L663.6 231.4 L673.2 231.4 L682.8 256.7 L692.3 276.4 L701.9 229.2 L711.5 243.8 L721.1 242.7 L730.6 254.5 L740.2 237.6 L749.8 248.3 L759.3 247.7 L768.9 258.4 L778.5 247.2 L788.1 203.8 L797.6 239.3 L807.2 239.9 L816.8 228.0 L826.4 260.1 L835.9 255.6 L845.5 254.5 L855.1 223.0 L864.7 261.2 L874.2 258.4 L883.8 238.7 L893.4 262.4 L893.4 485.5 L41.3 485.5 Z" fill="url(#gl5)"/><path d="M41.3 230.3 L50.9 221.8 L60.4 230.3 L70.0 234.2 L79.6 261.2 L89.2 228.0 L98.7 193.7 L108.3 253.4 L117.9 246.0 L127.5 248.3 L137.0 251.1 L146.6 240.4 L156.2 220.7 L165.8 224.7 L175.3 216.2 L184.9 239.3 L194.5 226.3 L204.1 219.6 L213.6 228.6 L223.2 239.9 L232.8 220.7 L242.4 232.5 L251.9 253.4 L261.5 241.5 L271.1 202.7 L280.6 230.3 L290.2 230.8 L299.8 272.5 L309.4 253.9 L318.9 231.4 L328.5 241.5 L338.1 259.6 L347.7 220.1 L357.2 243.8 L366.8 241.5 L376.4 228.0 L386.0 224.1 L395.5 241.0 L405.1 195.4 L414.7 227.5 L424.3 197.1 L433.8 235.3 L443.4 236.5 L453.0 244.4 L462.6 218.5 L472.1 241.0 L481.7 228.0 L491.3 269.1 L500.9 223.0 L510.4 231.4 L520.0 255.0 L529.6 226.3 L539.1 236.5 L548.7 233.1 L558.3 261.8 L567.9 219.0 L577.4 228.6 L587.0 264.6 L596.6 231.4 L606.2 275.3 L615.7 246.0 L625.3 225.8 L634.9 221.8 L644.5 217.3 L654.0 224.7 L663.6 242.1 L673.2 250.0 L682.8 244.9 L692.3 244.4 L701.9 232.5 L711.5 271.9 L721.1 229.7 L730.6 243.8 L740.2 241.5 L749.8 268.6 L759.3 264.1 L768.9 249.4 L778.5 260.1 L788.1 250.5 L797.6 234.8 L807.2 265.7 L816.8 214.0 L826.4 259.6 L835.9 273.6 L845.5 218.5 L855.1 238.2 L864.7 248.3 L874.2 244.9 L883.8 260.1 L893.4 236.5 L893.4 485.5 L41.3 485.5 Z" fill="url(#gd5)"/><path d="M41.3 212.8 L50.9 262.4 L60.4 229.2 L70.0 228.0 L79.6 261.8 L89.2 190.3 L98.7 222.4 L108.3 230.3 L117.9 243.2 L127.5 237.0 L137.0 225.2 L146.6 257.3 L156.2 246.6 L165.8 226.9 L175.3 223.5 L184.9 220.7 L194.5 262.4 L204.1 230.3 L213.6 237.0 L223.2 262.9 L232.8 197.1 L242.4 248.3 L251.9 255.6 L261.5 231.4 L271.1 248.3 L280.6 242.1 L290.2 241.5 L299.8 247.2 L309.4 277.0 L318.9 206.1 L328.5 252.8 L338.1 265.7 L347.7 242.1 L357.2 246.0 L366.8 241.0 L376.4 244.4 L386.0 253.9 L395.5 256.2 L405.1 206.6 L414.7 253.4 L424.3 190.9 L433.8 216.8 L443.4 264.6 L453.0 243.2 L462.6 250.0 L472.1 241.5 L481.7 233.1 L491.3 250.0 L500.9 244.4 L510.4 259.6 L520.0 249.4 L529.6 213.4 L539.1 237.0 L548.7 251.7 L558.3 253.4 L567.9 225.2 L577.4 244.9 L587.0 251.7 L596.6 229.7 L606.2 273.1 L615.7 257.9 L625.3 249.4 L634.9 211.1 L644.5 244.9 L654.0 223.0 L663.6 231.4 L673.2 231.4 L682.8 256.7 L692.3 276.4 L701.9 229.2 L711.5 243.8 L721.1 242.7 L730.6 254.5 L740.2 237.6 L749.8 248.3 L759.3 247.7 L768.9 258.4 L778.5 247.2 L788.1 203.8 L797.6 239.3 L807.2 239.9 L816.8 228.0 L826.4 260.1 L835.9 255.6 L845.5 254.5 L855.1 223.0 L864.7 261.2 L874.2 258.4 L883.8 238.7 L893.4 262.4" fill="none" stroke="#8486ff" stroke-width="2.15" stroke-linejoin="round"/><path d="M41.3 230.3 L50.9 221.8 L60.4 230.3 L70.0 234.2 L79.6 261.2 L89.2 228.0 L98.7 193.7 L108.3 253.4 L117.9 246.0 L127.5 248.3 L137.0 251.1 L146.6 240.4 L156.2 220.7 L165.8 224.7 L175.3 216.2 L184.9 239.3 L194.5 226.3 L204.1 219.6 L213.6 228.6 L223.2 239.9 L232.8 220.7 L242.4 232.5 L251.9 253.4 L261.5 241.5 L271.1 202.7 L280.6 230.3 L290.2 230.8 L299.8 272.5 L309.4 253.9 L318.9 231.4 L328.5 241.5 L338.1 259.6 L347.7 220.1 L357.2 243.8 L366.8 241.5 L376.4 228.0 L386.0 224.1 L395.5 241.0 L405.1 195.4 L414.7 227.5 L424.3 197.1 L433.8 235.3 L443.4 236.5 L453.0 244.4 L462.6 218.5 L472.1 241.0 L481.7 228.0 L491.3 269.1 L500.9 223.0 L510.4 231.4 L520.0 255.0 L529.6 226.3 L539.1 236.5 L548.7 233.1 L558.3 261.8 L567.9 219.0 L577.4 228.6 L587.0 264.6 L596.6 231.4 L606.2 275.3 L615.7 246.0 L625.3 225.8 L634.9 221.8 L644.5 217.3 L654.0 224.7 L663.6 242.1 L673.2 250.0 L682.8 244.9 L692.3 244.4 L701.9 232.5 L711.5 271.9 L721.1 229.7 L730.6 243.8 L740.2 241.5 L749.8 268.6 L759.3 264.1 L768.9 249.4 L778.5 260.1 L788.1 250.5 L797.6 234.8 L807.2 265.7 L816.8 214.0 L826.4 259.6 L835.9 273.6 L845.5 218.5 L855.1 238.2 L864.7 248.3 L874.2 244.9 L883.8 260.1 L893.4 236.5" fill="none" stroke="#1c5790" stroke-width="2.15" stroke-linejoin="round"/><rect x="32" y="189" width="866" height="2" fill="#47474a"/><rect x="32" y="489" width="866" height="2" fill="#333336"/><rect x="32" y="490" width="1.5" height="13" fill="#333336"/><rect x="251.5" y="490" width="1.5" height="13" fill="#333336"/><rect x="471" y="490" width="1.5" height="13" fill="#333336"/></svg><div class="t" style="left:38px;top:499.62px;font-size:22.3px;color:#b4b4b6;">12:35:00</div><div class="t" style="left:257.5px;top:499.62px;font-size:22.3px;color:#b4b4b6;">13:21:00</div><div class="t" style="left:477px;top:499.62px;font-size:22.3px;color:#b4b4b6;">14:07:00</div></div><div class="card" style="left:1930px;top:982px;width:930px;height:540px"><div class="hdr"></div><div class="t" style="left:30.5px;top:18.17px;font-size:27.8px;color:#f2f2f2;-webkit-text-stroke:0.35px #f2f2f2;">Keeper Received Bytes</div><div class="sw" style="left:40px;top:90px;background:#8586ff"></div><div class="sw" style="left:40px;top:130px;background:#1f5a8f"></div><div class="t" style="left:67px;top:86.03px;font-size:26.55px;color:#bdbdbf;">chi-shared-cluster-repl-otel-0-0.clickhouse.svc.cluster.local</div><div class="t" style="left:67px;top:126.03px;font-size:26.55px;color:#bdbdbf;transform:scaleX(0.993);transform-origin:0 0;">chi-shared-cluster-repl-otel-0-1.clickhouse.svc.cluster.local</div><svg style="position:absolute;left:34px;top:168px" width="16" height="16" viewBox="0 0 16 16"><path d="M8 1.5 V14.5 M2.5 9 L8 14.5 L13.5 9" fill="none" stroke="#b4b4b6" stroke-width="1.9"/></svg><div class="t" style="left:63px;top:165.81px;font-size:20.9px;color:#b4b4b6;transform:scaleX(1.06);transform-origin:0 0;">37 MB max</div><svg style="position:absolute;left:0;top:0" width="930" height="540" viewBox="0 0 930 540"><defs><linearGradient id="g6" x1="0" y1="0" x2="0" y2="1"><stop offset="0" stop-color="#3d5a96"/><stop offset="1" stop-color="#262628"/></linearGradient></defs><defs><linearGradient id="gl6" gradientUnits="userSpaceOnUse" x1="0" y1="190.2" x2="0" y2="485.5"><stop offset="0" stop-color="#8486ff" stop-opacity="0.6"/><stop offset="1" stop-color="#8486ff" stop-opacity="0"/></linearGradient><linearGradient id="gd6" gradientUnits="userSpaceOnUse" x1="0" y1="190.2" x2="0" y2="485.5"><stop offset="0" stop-color="#225890" stop-opacity="0.5"/><stop offset="1" stop-color="#225890" stop-opacity="0"/></linearGradient></defs><path d="M41.3 316.5 L50.9 307.8 L60.4 269.3 L70.0 275.8 L79.6 251.2 L89.2 249.7 L98.7 265.7 L108.3 240.3 L117.9 286.7 L127.5 309.9 L137.0 296.9 L146.6 309.2 L156.2 330.3 L165.8 307.0 L175.3 326.6 L184.9 308.5 L194.5 300.5 L204.1 334.6 L213.6 306.3 L223.2 299.8 L232.8 281.7 L242.4 228.0 L251.9 271.5 L261.5 316.5 L271.1 325.2 L280.6 322.3 L290.2 321.5 L299.8 280.2 L309.4 270.0 L318.9 271.5 L328.5 255.5 L338.1 275.1 L347.7 317.9 L357.2 330.3 L366.8 336.1 L376.4 331.7 L386.0 333.9 L395.5 325.9 L405.1 329.5 L414.7 302.7 L424.3 286.7 L433.8 267.9 L443.4 299.1 L453.0 331.0 L462.6 325.9 L472.1 328.8 L481.7 329.5 L491.3 327.3 L500.9 346.9 L510.4 346.9 L520.0 303.4 L529.6 267.1 L539.1 307.0 L548.7 291.1 L558.3 303.4 L567.9 312.8 L577.4 308.5 L587.0 268.6 L596.6 267.1 L606.2 265.0 L615.7 270.0 L625.3 280.9 L634.9 272.2 L644.5 250.5 L654.0 273.7 L663.6 238.1 L673.2 233.8 L682.8 286.7 L692.3 320.1 L701.9 319.4 L711.5 263.5 L721.1 211.3 L730.6 256.3 L740.2 265.7 L749.8 277.3 L759.3 269.3 L768.9 256.3 L778.5 228.0 L788.1 235.2 L797.6 230.9 L807.2 212.7 L816.8 233.8 L826.4 257.7 L835.9 252.6 L845.5 246.1 L855.1 283.8 L864.7 301.2 L874.2 313.6 L883.8 317.2 L893.4 323.7 L893.4 485.5 L41.3 485.5 Z" fill="url(#gl6)"/><path d="M41.3 285.3 L50.9 291.1 L60.4 310.7 L70.0 313.6 L79.6 302.7 L89.2 304.9 L98.7 317.2 L108.3 299.8 L117.9 310.7 L127.5 306.3 L137.0 294.0 L146.6 288.2 L156.2 219.3 L165.8 191.0 L175.3 204.8 L184.9 218.5 L194.5 278.0 L204.1 248.3 L213.6 294.7 L223.2 294.7 L232.8 319.4 L242.4 336.1 L251.9 294.0 L261.5 281.7 L271.1 265.0 L280.6 275.1 L290.2 281.7 L299.8 310.7 L309.4 336.1 L318.9 333.9 L328.5 339.7 L338.1 310.7 L347.7 281.7 L357.2 270.0 L366.8 262.1 L376.4 265.7 L386.0 257.7 L395.5 258.4 L405.1 258.4 L414.7 222.9 L424.3 265.7 L433.8 315.0 L443.4 257.7 L453.0 258.4 L462.6 267.9 L472.1 257.7 L481.7 264.2 L491.3 256.3 L500.9 252.6 L510.4 246.1 L520.0 257.0 L529.6 270.0 L539.1 288.9 L548.7 288.2 L558.3 293.3 L567.9 291.8 L577.4 293.3 L587.0 331.0 L596.6 338.2 L606.2 341.9 L615.7 340.4 L625.3 311.4 L634.9 250.5 L644.5 265.7 L654.0 286.7 L663.6 302.7 L673.2 348.4 L682.8 321.5 L692.3 304.1 L701.9 304.9 L711.5 333.9 L721.1 341.1 L730.6 357.8 L740.2 352.7 L749.8 324.4 L759.3 360.1 L768.9 374.6 L778.5 328.8 L788.1 318.6 L797.6 299.1 L807.2 303.4 L816.8 308.5 L826.4 334.6 L835.9 349.0 L845.5 364.3 L855.1 299.1 L864.7 246.1 L874.2 286.0 L883.8 296.9 L893.4 291.8 L893.4 485.5 L41.3 485.5 Z" fill="url(#gd6)"/><path d="M41.3 316.5 L50.9 307.8 L60.4 269.3 L70.0 275.8 L79.6 251.2 L89.2 249.7 L98.7 265.7 L108.3 240.3 L117.9 286.7 L127.5 309.9 L137.0 296.9 L146.6 309.2 L156.2 330.3 L165.8 307.0 L175.3 326.6 L184.9 308.5 L194.5 300.5 L204.1 334.6 L213.6 306.3 L223.2 299.8 L232.8 281.7 L242.4 228.0 L251.9 271.5 L261.5 316.5 L271.1 325.2 L280.6 322.3 L290.2 321.5 L299.8 280.2 L309.4 270.0 L318.9 271.5 L328.5 255.5 L338.1 275.1 L347.7 317.9 L357.2 330.3 L366.8 336.1 L376.4 331.7 L386.0 333.9 L395.5 325.9 L405.1 329.5 L414.7 302.7 L424.3 286.7 L433.8 267.9 L443.4 299.1 L453.0 331.0 L462.6 325.9 L472.1 328.8 L481.7 329.5 L491.3 327.3 L500.9 346.9 L510.4 346.9 L520.0 303.4 L529.6 267.1 L539.1 307.0 L548.7 291.1 L558.3 303.4 L567.9 312.8 L577.4 308.5 L587.0 268.6 L596.6 267.1 L606.2 265.0 L615.7 270.0 L625.3 280.9 L634.9 272.2 L644.5 250.5 L654.0 273.7 L663.6 238.1 L673.2 233.8 L682.8 286.7 L692.3 320.1 L701.9 319.4 L711.5 263.5 L721.1 211.3 L730.6 256.3 L740.2 265.7 L749.8 277.3 L759.3 269.3 L768.9 256.3 L778.5 228.0 L788.1 235.2 L797.6 230.9 L807.2 212.7 L816.8 233.8 L826.4 257.7 L835.9 252.6 L845.5 246.1 L855.1 283.8 L864.7 301.2 L874.2 313.6 L883.8 317.2 L893.4 323.7" fill="none" stroke="#8486ff" stroke-width="2.15" stroke-linejoin="round"/><path d="M41.3 285.3 L50.9 291.1 L60.4 310.7 L70.0 313.6 L79.6 302.7 L89.2 304.9 L98.7 317.2 L108.3 299.8 L117.9 310.7 L127.5 306.3 L137.0 294.0 L146.6 288.2 L156.2 219.3 L165.8 191.0 L175.3 204.8 L184.9 218.5 L194.5 278.0 L204.1 248.3 L213.6 294.7 L223.2 294.7 L232.8 319.4 L242.4 336.1 L251.9 294.0 L261.5 281.7 L271.1 265.0 L280.6 275.1 L290.2 281.7 L299.8 310.7 L309.4 336.1 L318.9 333.9 L328.5 339.7 L338.1 310.7 L347.7 281.7 L357.2 270.0 L366.8 262.1 L376.4 265.7 L386.0 257.7 L395.5 258.4 L405.1 258.4 L414.7 222.9 L424.3 265.7 L433.8 315.0 L443.4 257.7 L453.0 258.4 L462.6 267.9 L472.1 257.7 L481.7 264.2 L491.3 256.3 L500.9 252.6 L510.4 246.1 L520.0 257.0 L529.6 270.0 L539.1 288.9 L548.7 288.2 L558.3 293.3 L567.9 291.8 L577.4 293.3 L587.0 331.0 L596.6 338.2 L606.2 341.9 L615.7 340.4 L625.3 311.4 L634.9 250.5 L644.5 265.7 L654.0 286.7 L663.6 302.7 L673.2 348.4 L682.8 321.5 L692.3 304.1 L701.9 304.9 L711.5 333.9 L721.1 341.1 L730.6 357.8 L740.2 352.7 L749.8 324.4 L759.3 360.1 L768.9 374.6 L778.5 328.8 L788.1 318.6 L797.6 299.1 L807.2 303.4 L816.8 308.5 L826.4 334.6 L835.9 349.0 L845.5 364.3 L855.1 299.1 L864.7 246.1 L874.2 286.0 L883.8 296.9 L893.4 291.8" fill="none" stroke="#1c5790" stroke-width="2.15" stroke-linejoin="round"/><rect x="32" y="189" width="866" height="2" fill="#47474a"/><rect x="32" y="489" width="866" height="2" fill="#333336"/><rect x="32" y="490" width="1.5" height="13" fill="#333336"/><rect x="251.5" y="490" width="1.5" height="13" fill="#333336"/><rect x="471" y="490" width="1.5" height="13" fill="#333336"/></svg><div class="t" style="left:38px;top:499.62px;font-size:22.3px;color:#b4b4b6;">12:35:00</div><div class="t" style="left:257.5px;top:499.62px;font-size:22.3px;color:#b4b4b6;">13:21:00</div><div class="t" style="left:477px;top:499.62px;font-size:22.3px;color:#b4b4b6;">14:07:00</div></div><div class="card" style="left:2880px;top:982px;width:930px;height:540px"><div class="hdr"></div><div class="t" style="left:30.5px;top:18.17px;font-size:27.8px;color:#f2f2f2;-webkit-text-stroke:0.35px #f2f2f2;">Keeper Alive Connections</div><div class="sw" style="left:40px;top:90px;background:#8586ff"></div><div class="sw" style="left:40px;top:130px;background:#1f5a8f"></div><div class="t" style="left:67px;top:86.03px;font-size:26.55px;color:#bdbdbf;">chi-shared-cluster-repl-otel-0-0.clickhouse.svc.cluster.local</div><div class="t" style="left:67px;top:126.03px;font-size:26.55px;color:#bdbdbf;transform:scaleX(0.993);transform-origin:0 0;">chi-shared-cluster-repl-otel-0-1.clickhouse.svc.cluster.local</div><svg style="position:absolute;left:34px;top:168px" width="16" height="16" viewBox="0 0 16 16"><path d="M8 1.5 V14.5 M2.5 9 L8 14.5 L13.5 9" fill="none" stroke="#b4b4b6" stroke-width="1.9"/></svg><div class="t" style="left:63px;top:165.81px;font-size:20.9px;color:#b4b4b6;transform:scaleX(1.0);transform-origin:0 0;">1</div><svg style="position:absolute;left:0;top:0" width="930" height="540" viewBox="0 0 930 540"><defs><linearGradient id="g7" x1="0" y1="0" x2="0" y2="1"><stop offset="0" stop-color="#3d5a96"/><stop offset="1" stop-color="#262628"/></linearGradient></defs><path d="M32 485.5 H893.5" stroke="#1c5790" stroke-width="1.5"/><rect x="32" y="189" width="866" height="2" fill="#47474a"/><rect x="32" y="489" width="866" height="2" fill="#333336"/><rect x="32" y="490" width="1.5" height="13" fill="#333336"/><rect x="251.5" y="490" width="1.5" height="13" fill="#333336"/><rect x="471" y="490" width="1.5" height="13" fill="#333336"/></svg><div class="t" style="left:38px;top:499.62px;font-size:22.3px;color:#b4b4b6;">12:35:00</div><div class="t" style="left:257.5px;top:499.62px;font-size:22.3px;color:#b4b4b6;">13:21:00</div><div class="t" style="left:477px;top:499.62px;font-size:22.3px;color:#b4b4b6;">14:07:00</div></div><div style="position:absolute;left:3720px;top:1760px;width:136px;height:136px;border-radius:50%;background:radial-gradient(circle, rgba(40,44,60,0.5) 0%, rgba(27,27,30,0) 70%)"></div><div style="position:absolute;left:3752px;top:1794px;width:72px;height:72px;box-sizing:border-box;border-radius:50%;background:#0052b2;border:2.5px solid #05070d;box-shadow:inset 0 0 0 1.5px #3d73c0"></div><svg style="position:absolute;left:3760px;top:1800px" width="60" height="50" viewBox="3760 1800 60 50"><rect x="3774" y="1818" width="17" height="3" fill="#fff"/><circle cx="3799" cy="1819" r="5" fill="#fff"/><rect x="3774" y="1828" width="28" height="3" fill="#fff"/><rect x="3774" y="1838" width="28" height="3" fill="#fff"/></svg>
</body></html>
